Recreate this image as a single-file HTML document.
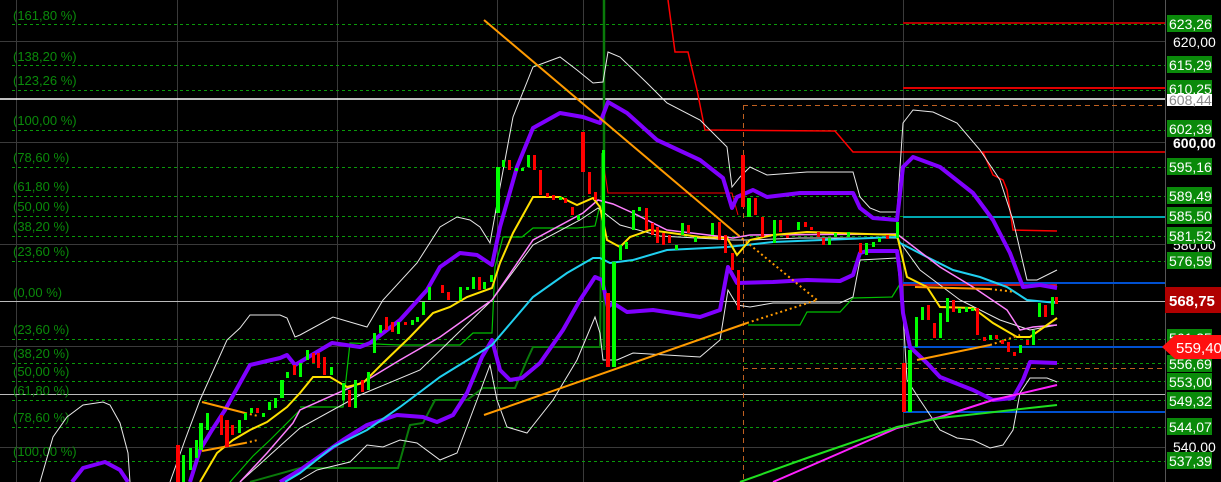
<!DOCTYPE html>
<html><head><meta charset="utf-8"><style>
html,body{margin:0;padding:0;background:#000;width:1221px;height:482px;overflow:hidden}
svg{display:block}
text{font-family:"Liberation Sans",sans-serif}
</style></head><body>
<svg width="1221" height="482" viewBox="0 0 1221 482" xmlns="http://www.w3.org/2000/svg">
<rect width="1221" height="482" fill="#000"/>
<!-- grid -->
<g stroke="#3a3a3a" stroke-width="1">
<line x1="16.5" y1="0" x2="16.5" y2="482"/><line x1="177.5" y1="0" x2="177.5" y2="482"/><line x1="337.5" y1="0" x2="337.5" y2="482"/><line x1="497.5" y1="0" x2="497.5" y2="482"/><line x1="583.5" y1="0" x2="583.5" y2="482"/><line x1="903.5" y1="0" x2="903.5" y2="482"/><line x1="1113.5" y1="0" x2="1113.5" y2="482"/>
<line x1="0" y1="41.5" x2="1165" y2="41.5"/><line x1="0" y1="142.5" x2="1165" y2="142.5"/><line x1="0" y1="244.5" x2="1165" y2="244.5"/><line x1="0" y1="346.5" x2="1165" y2="346.5"/><line x1="0" y1="447.5" x2="1165" y2="447.5"/>
</g>
<line x1="1165.5" y1="0" x2="1165.5" y2="482" stroke="#555"/>
<!-- fib dashed -->
<g stroke="#0a9a0a" stroke-width="1" stroke-dasharray="3,3">
<line x1="12" y1="24.5" x2="1165" y2="24.5"/><line x1="12" y1="65.5" x2="1165" y2="65.5"/><line x1="12" y1="90.5" x2="1165" y2="90.5"/><line x1="12" y1="130.5" x2="1165" y2="130.5"/><line x1="12" y1="167.5" x2="1165" y2="167.5"/><line x1="12" y1="196.5" x2="1165" y2="196.5"/><line x1="12" y1="216.5" x2="1165" y2="216.5"/><line x1="12" y1="236.5" x2="1165" y2="236.5"/><line x1="12" y1="261.5" x2="1165" y2="261.5"/><line x1="12" y1="339.5" x2="1165" y2="339.5"/><line x1="12" y1="363.5" x2="1165" y2="363.5"/><line x1="12" y1="381.5" x2="1165" y2="381.5"/><line x1="12" y1="400.5" x2="1165" y2="400.5"/><line x1="12" y1="427.5" x2="1165" y2="427.5"/><line x1="12" y1="461.5" x2="1165" y2="461.5"/>
</g>
<line x1="0" y1="99" x2="1165" y2="99" stroke="#fff" stroke-width="1.5"/>
<line x1="0" y1="301.5" x2="1165" y2="301.5" stroke="#bbb" stroke-width="1"/>
<line x1="0" y1="394.5" x2="1165" y2="394.5" stroke="#bbb" stroke-width="1"/>
<!-- fib labels -->
<g fill="#0a8a0a" font-size="13">
<text x="13" y="20">(161,80 %)</text><text x="13" y="61">(138,20 %)</text><text x="13" y="85">(123,26 %)</text><text x="13" y="125">(100,00 %)</text><text x="13" y="162">(78,60 %)</text><text x="13" y="191">(61,80 %)</text><text x="13" y="211">(50,00 %)</text><text x="13" y="231">(38,20 %)</text><text x="13" y="256">(23,60 %)</text><text x="13" y="297">(0,00 %)</text><text x="13" y="334">(23,60 %)</text><text x="13" y="358">(38,20 %)</text><text x="13" y="376">(50,00 %)</text><text x="13" y="395">(61,80 %)</text><text x="13" y="422">(78,60 %)</text><text x="13" y="456">(100,00 %)</text>
</g>
<!-- right horizontal levels -->
<line x1="903" y1="23" x2="1165" y2="23" stroke="#b00000" stroke-width="2"/>
<line x1="903" y1="88" x2="1165" y2="88" stroke="#e00000" stroke-width="2"/>
<line x1="743" y1="105.5" x2="1165" y2="105.5" stroke="#c06020" stroke-dasharray="5,4"/>
<line x1="743" y1="368.5" x2="1165" y2="368.5" stroke="#c06020" stroke-dasharray="5,4"/>
<line x1="743.5" y1="105" x2="743.5" y2="482" stroke="#c06020" stroke-dasharray="5,4"/>
<line x1="903" y1="217" x2="1165" y2="217" stroke="#00a8b0" stroke-width="2"/>
<line x1="903" y1="283" x2="1165" y2="283" stroke="#0050d0" stroke-width="2"/>
<line x1="903" y1="347" x2="1165" y2="347" stroke="#0050d0" stroke-width="2"/>
<line x1="903" y1="412" x2="1165" y2="412" stroke="#0050d0" stroke-width="2"/>
<line x1="903" y1="285" x2="1057" y2="285" stroke="#ff2020" stroke-width="1.5"/>
<!-- red steps -->
<polyline fill="none" stroke="#ff0000" stroke-width="1.5" points="668,0 675,52 688,52 697,90 705,130 835,131 853,152 983,152 1165,152"/>
<polyline fill="none" stroke="#ff0000" stroke-width="1.5" points="983,152 993,175 1003,180 1007,190 1013,230 1057,231"/>
<polyline fill="none" stroke="#ff0000" stroke-width="1" points="603,160 608,193 732,193 738,215"/>
<!-- green steps -->
<line x1="604" y1="0" x2="604" y2="350" stroke="#0a7a0a" stroke-width="2.5"/>
<polyline fill="none" stroke="#0a7a0a" stroke-width="2" points="250,482 300,468 398,468 410,425 423,423 435,400 467,400 483,388 515,388 527,360 533,347 600,347 602,153"/>
<polyline fill="none" stroke="#00c000" stroke-width="1.2" points="300,407 343,407 350,343 400,345 460,345 473,333 492,333 495,267 503,237 522,237 533,228 577,228 595,226 600,205"/>
<polyline fill="none" stroke="#00c000" stroke-width="1.2" points="748,325 800,325 807,312 840,312 853,298 892,297 900,284"/>
<polyline fill="none" stroke="#00c000" stroke-width="1.2" points="230,482 253,456 270,440 285,425 300,410"/>
<!-- white bands -->
<g fill="none" stroke="#e8e8e8" stroke-width="1">
<polyline points="40,482 53,437 67,417 83,405 103,402 110,405 120,423 128,453 130,482"/>
<polyline points="170,482 185,440 200,400 227,340 240,328 250,315 280,315 287,318 295,337 300,335 333,317 367,327 383,300 417,263 440,227 457,217 470,220 480,227 490,243 500,187 513,117 533,67 560,57 577,70 593,83 603,82 608,52 620,57 647,83 667,103 700,120 727,147 732,187 740,177 750,167 767,175 807,172 853,172 860,197 870,208 880,212 897,212 903,123 913,110 933,112 957,123 980,150 1000,180 1013,220 1027,280 1037,280 1057,270"/>
<polyline points="300,480 317,470 350,462 367,445 383,447 400,440 417,443 440,460 457,453 477,400 490,365 497,400 507,427 527,433 553,400 577,360 595,317 600,333 603,360 617,360 633,353 700,357 720,340 728,290 737,305 750,307 773,303 840,303 853,297 860,260 897,258 903,313 907,380 920,400 940,430 957,438 973,440 990,448 1003,445 1013,430 1020,393 1030,378 1047,378 1057,382"/>
<polyline points="240,482 270,455 300,428 360,395 420,370 492,300 533,245 580,220 598,208 620,225 660,236 733,240 750,240 800,238 897,238 920,270 960,300 1000,320 1030,330 1057,325"/>
</g>
<!-- purple bands -->
<g fill="none" stroke="#8000ff" stroke-width="4" stroke-linejoin="round">
<polyline points="72,482 83,468 105,462 120,470 128,482"/>
<polyline points="190,482 200,450 212,430 225,410 250,365 280,358 287,355 295,365 300,362 332,343 360,347 370,343 400,320 427,290 440,267 460,253 477,255 492,265 500,227 517,167 533,128 560,113 583,117 600,123 608,102 627,113 657,140 700,160 723,178 732,208 737,197 753,190 767,197 800,193 853,193 860,208 873,218 897,220 903,167 913,157 940,167 973,193 993,220 1010,253 1023,287 1040,285 1057,288"/>
<polyline points="280,482 300,470 343,440 367,425 397,415 423,417 437,422 453,415 467,393 482,357 492,340 500,370 510,380 522,378 540,363 563,330 580,300 595,277 602,280 608,307 613,303 627,312 653,310 700,317 720,310 728,267 737,283 773,282 807,280 840,281 853,275 860,253 867,251 897,251 900,273 903,313 910,347 927,363 940,377 973,390 993,400 1013,398 1023,380 1030,362 1057,363"/>
</g>
<!-- cyan -->
<polyline fill="none" stroke="#20d0f0" stroke-width="2" points="285,482 300,473 333,447 367,430 400,407 440,377 492,345 533,297 567,273 593,258 600,258 610,263 633,260 667,250 727,247 773,242 897,237 900,243 927,257 953,270 980,277 1007,287 1027,300 1057,303"/>
<!-- pink -->
<polyline fill="none" stroke="#ff80ff" stroke-width="1.5" points="240,482 267,453 293,423 300,410 367,380 400,360 440,337 492,300 533,240 583,213 598,200 613,204 633,213 667,230 733,238 750,235 897,234 940,267 973,287 1007,310 1020,330 1033,327 1057,325"/>
<!-- yellow -->
<polyline fill="none" stroke="#ffe000" stroke-width="2" points="200,482 217,453 233,440 250,430 267,422 287,407 300,393 313,377 330,377 347,387 363,383 383,363 410,337 433,313 450,307 467,297 492,288 500,263 513,233 533,197 560,197 577,205 593,198 600,207 607,240 620,247 630,237 650,230 700,237 727,238 737,255 750,240 773,235 807,232 897,235 907,277 927,287 940,307 973,308 993,323 1017,337 1030,337 1057,318"/>
<!-- magenta & green rising -->
<polyline fill="none" stroke="#ff20ff" stroke-width="2" points="773,482 840,453 897,428 940,417 993,400 1057,385"/>
<polyline fill="none" stroke="#20e020" stroke-width="2" points="740,482 807,458 897,427 940,418 1057,405"/>
<!-- orange trendlines -->
<g stroke="#ff9a00" stroke-width="2" fill="none">
<line x1="484" y1="20" x2="738" y2="235"/>
<line x1="484" y1="415" x2="747" y2="323"/>
<line x1="202" y1="402" x2="245" y2="413"/>
<line x1="202" y1="451" x2="245" y2="443"/>
<line x1="915" y1="287" x2="990" y2="289"/>
<line x1="917" y1="360" x2="990" y2="345"/>
</g>
<g stroke="#ff9a00" stroke-width="2" fill="none" stroke-dasharray="2,3">
<line x1="738" y1="235" x2="817" y2="300"/>
<line x1="747" y1="323" x2="817" y2="300"/>
<line x1="245" y1="443" x2="258" y2="440"/>
<line x1="245" y1="413" x2="258" y2="416"/>
<line x1="990" y1="289" x2="1015" y2="292"/>
<line x1="990" y1="345" x2="1020" y2="335"/>
</g>
<!-- candles -->
<g fill="#ff0000">
<rect x="176" y="445" width="4" height="37"/><rect x="220" y="415" width="3" height="20"/><rect x="225" y="420" width="4" height="27"/><rect x="231" y="425" width="3" height="10"/><rect x="256" y="408" width="3" height="5"/><rect x="293" y="365" width="3" height="10"/>
<rect x="312" y="353" width="3" height="10"/><rect x="317" y="353" width="3" height="15"/><rect x="323" y="357" width="3" height="18"/><rect x="348" y="390" width="3" height="17"/><rect x="361" y="380" width="3" height="12"/><rect x="385" y="317" width="3" height="13"/><rect x="391" y="322" width="3" height="10"/><rect x="404" y="322" width="3" height="3"/><rect x="441" y="285" width="3" height="8"/><rect x="447" y="292" width="3" height="8"/><rect x="478" y="277" width="3" height="13"/>
<rect x="508" y="160" width="3" height="10"/><rect x="533" y="155" width="3" height="15"/><rect x="539" y="170" width="3" height="25"/><rect x="546" y="193" width="3" height="4"/><rect x="552" y="195" width="3" height="5"/><rect x="564" y="198" width="3" height="5"/><rect x="571" y="207" width="3" height="8"/><rect x="581" y="132" width="4" height="40"/><rect x="588" y="172" width="3" height="22"/><rect x="594" y="192" width="3" height="8"/><rect x="606" y="293" width="4" height="74"/>
<rect x="645" y="208" width="3" height="22"/><rect x="651" y="223" width="3" height="12"/><rect x="656" y="227" width="3" height="16"/><rect x="662" y="233" width="3" height="12"/><rect x="668" y="235" width="3" height="8"/><rect x="687" y="225" width="3" height="8"/><rect x="718" y="222" width="3" height="18"/><rect x="724" y="235" width="3" height="18"/><rect x="731" y="253" width="3" height="17"/><rect x="737" y="270" width="3" height="40"/><rect x="741" y="155" width="4" height="52"/>
<rect x="754" y="198" width="3" height="17"/><rect x="761" y="217" width="3" height="20"/><rect x="779" y="220" width="3" height="12"/><rect x="786" y="235" width="3" height="3"/><rect x="804" y="222" width="3" height="5"/><rect x="810" y="227" width="3" height="3"/><rect x="817" y="232" width="3" height="5"/><rect x="822" y="238" width="3" height="7"/><rect x="859" y="243" width="3" height="10"/><rect x="886" y="235" width="3" height="4"/>
<rect x="902" y="363" width="4" height="49"/><rect x="927" y="305" width="3" height="15"/><rect x="933" y="323" width="3" height="15"/><rect x="952" y="300" width="3" height="12"/><rect x="976" y="308" width="3" height="27"/><rect x="983" y="337" width="3" height="4"/><rect x="995" y="335" width="3" height="4"/><rect x="1001" y="340" width="3" height="4"/><rect x="1007" y="342" width="3" height="10"/><rect x="1013" y="352" width="3" height="4"/><rect x="1026" y="340" width="3" height="5"/><rect x="1044" y="305" width="3" height="12"/><rect x="1055" y="297" width="3" height="7"/>
</g>
<g fill="#00ff00">
<rect x="182" y="455" width="3" height="27"/><rect x="189" y="448" width="3" height="22"/><rect x="195" y="440" width="3" height="18"/><rect x="199" y="423" width="4" height="27"/><rect x="206" y="413" width="3" height="17"/><rect x="238" y="420" width="3" height="13"/><rect x="244" y="413" width="3" height="7"/><rect x="250" y="408" width="3" height="5"/><rect x="262" y="413" width="3" height="4"/><rect x="268" y="402" width="3" height="8"/><rect x="274" y="398" width="3" height="10"/><rect x="280" y="380" width="4" height="18"/><rect x="286" y="372" width="3" height="6"/>
<rect x="299" y="363" width="3" height="14"/><rect x="306" y="350" width="3" height="10"/><rect x="330" y="367" width="3" height="8"/><rect x="342" y="383" width="3" height="17"/><rect x="354" y="380" width="3" height="28"/><rect x="367" y="372" width="3" height="18"/><rect x="373" y="333" width="3" height="20"/><rect x="379" y="325" width="3" height="8"/><rect x="397" y="322" width="3" height="12"/><rect x="411" y="320" width="3" height="5"/><rect x="416" y="317" width="3" height="5"/><rect x="422" y="302" width="3" height="13"/><rect x="428" y="287" width="3" height="13"/><rect x="459" y="287" width="3" height="13"/><rect x="466" y="287" width="3" height="3"/><rect x="472" y="277" width="3" height="12"/><rect x="483" y="282" width="3" height="7"/><rect x="490" y="275" width="3" height="7"/>
<rect x="496" y="167" width="4" height="46"/><rect x="502" y="160" width="3" height="7"/><rect x="515" y="168" width="3" height="3"/><rect x="521" y="168" width="3" height="3"/><rect x="527" y="155" width="3" height="12"/><rect x="559" y="197" width="3" height="3"/><rect x="577" y="215" width="3" height="5"/><rect x="602" y="150" width="3" height="140"/><rect x="612" y="262" width="4" height="105"/><rect x="619" y="245" width="3" height="15"/><rect x="625" y="242" width="3" height="7"/><rect x="632" y="210" width="3" height="20"/><rect x="638" y="207" width="3" height="4"/><rect x="675" y="245" width="3" height="5"/><rect x="681" y="223" width="3" height="12"/><rect x="694" y="237" width="3" height="5"/><rect x="711" y="223" width="3" height="12"/>
<rect x="747" y="198" width="4" height="19"/><rect x="773" y="220" width="3" height="23"/><rect x="797" y="222" width="3" height="8"/><rect x="828" y="238" width="3" height="7"/><rect x="834" y="233" width="3" height="4"/><rect x="847" y="232" width="3" height="5"/><rect x="865" y="243" width="3" height="12"/><rect x="872" y="242" width="3" height="5"/><rect x="878" y="238" width="3" height="4"/><rect x="896" y="222" width="3" height="16"/>
<rect x="908" y="350" width="4" height="62"/><rect x="915" y="317" width="3" height="30"/><rect x="921" y="307" width="3" height="13"/><rect x="939" y="313" width="3" height="25"/><rect x="946" y="298" width="3" height="24"/><rect x="958" y="308" width="3" height="5"/><rect x="965" y="307" width="3" height="5"/><rect x="971" y="308" width="3" height="3"/><rect x="989" y="335" width="3" height="5"/><rect x="1019" y="345" width="3" height="8"/><rect x="1032" y="330" width="3" height="15"/><rect x="1038" y="303" width="3" height="14"/><rect x="1051" y="297" width="3" height="18"/>
</g>
<!-- right axis labels -->
<g font-size="14" fill="#fff">
<rect x="1167" y="15" width="45" height="17" fill="#0a8a0a"/><text x="1169" y="29">623,26</text>
<text x="1173" y="47" fill="#fff">620,00</text>
<rect x="1167" y="56" width="45" height="17" fill="#0a8a0a"/><text x="1169" y="70">615,29</text>
<rect x="1167" y="80" width="45" height="17" fill="#0a8a0a"/><text x="1169" y="94">610,25</text>
<rect x="1167" y="94" width="45" height="12" fill="#fff"/><text x="1169" y="105" fill="#888">608,44</text>
<rect x="1167" y="120" width="45" height="17" fill="#0a8a0a"/><text x="1169" y="134">602,39</text>
<text x="1173" y="148" font-weight="bold">600,00</text>
<rect x="1167" y="158" width="45" height="17" fill="#0a8a0a"/><text x="1169" y="172">595,16</text>
<rect x="1167" y="187" width="45" height="17" fill="#0a8a0a"/><text x="1169" y="201">589,49</text>
<rect x="1167" y="207" width="45" height="17" fill="#0a8a0a"/><text x="1169" y="221">585,50</text>
<text x="1173" y="250">580,00</text>
<rect x="1167" y="227" width="45" height="17" fill="#0a8a0a"/><text x="1169" y="241">581,52</text>
<rect x="1167" y="252" width="45" height="17" fill="#0a8a0a"/><text x="1169" y="266">576,59</text>
<rect x="1165" y="287" width="56" height="26" fill="#b00000"/><text x="1169" y="306" font-weight="bold" font-size="15">568,75</text>
<rect x="1167" y="329" width="45" height="17" fill="#0a8a0a"/><text x="1169" y="343">561,35</text>
<rect x="1167" y="355" width="45" height="17" fill="#0a8a0a"/><text x="1169" y="369">556,69</text>
<polygon points="1162,347 1175,335 1221,335 1221,359 1175,359" fill="#ff1010"/><text x="1176" y="353" font-size="15">559,40</text>
<rect x="1167" y="373" width="45" height="17" fill="#0a8a0a"/><text x="1169" y="387">553,00</text>
<rect x="1167" y="392" width="45" height="17" fill="#0a8a0a"/><text x="1169" y="406">549,32</text>
<rect x="1167" y="418" width="45" height="17" fill="#0a8a0a"/><text x="1169" y="432">544,07</text>
<text x="1173" y="452">540,00</text>
<rect x="1167" y="452" width="45" height="17" fill="#0a8a0a"/><text x="1169" y="466">537,39</text>
</g>
</svg>
</body></html>
